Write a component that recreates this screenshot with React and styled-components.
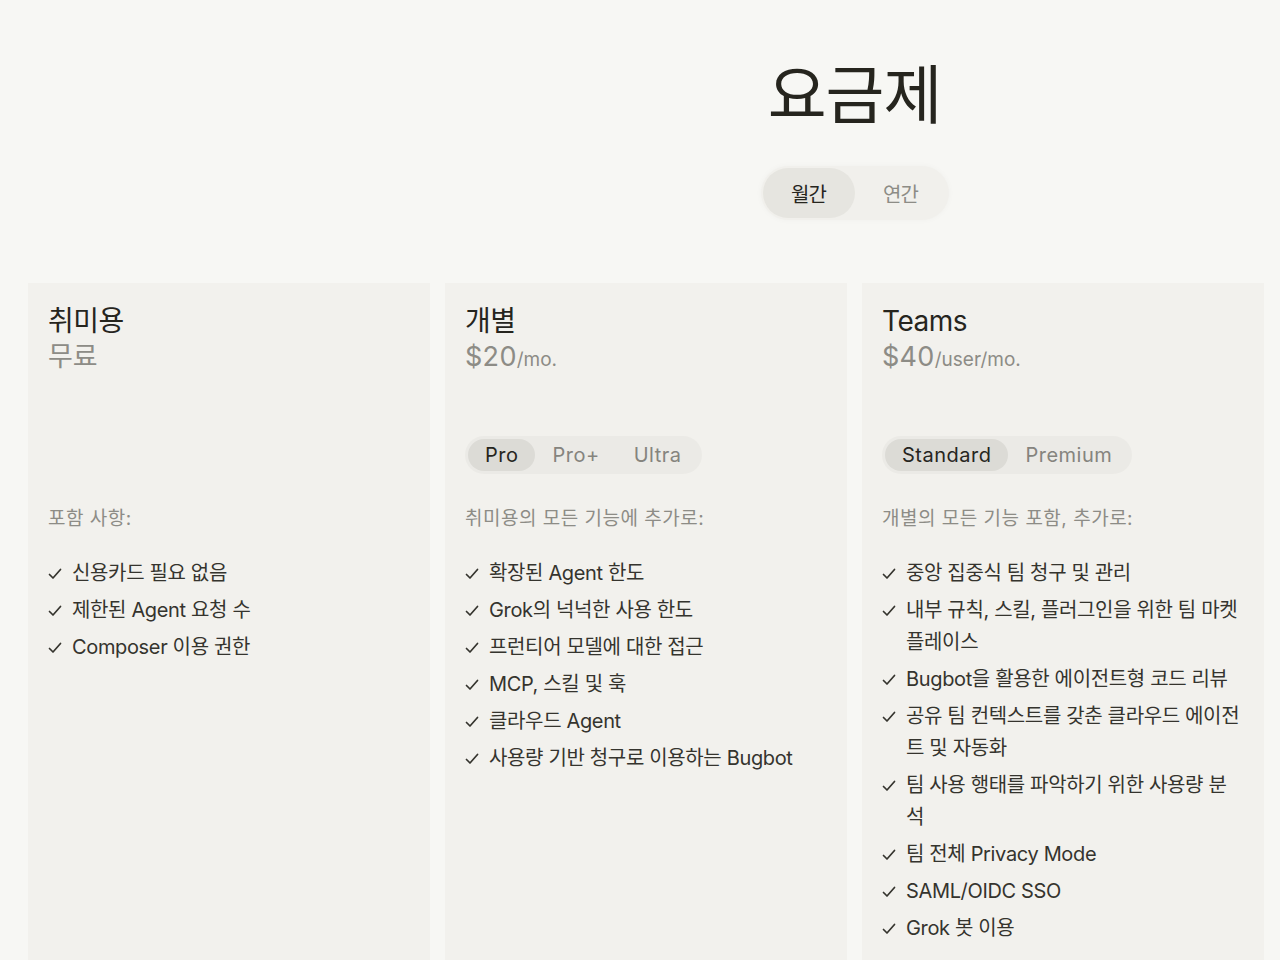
import React, { useState } from 'react';
import styled, { createGlobalStyle } from 'styled-components';

const GlobalStyle = createGlobalStyle`
  html, body {
    margin: 0;
    padding: 0;
    background: #f7f7f4;
  }
  body {
    font-family: 'Inter', 'Noto Sans CJK KR', sans-serif;
    color: #26251e;
  }
`;

const plans = [
  {
    name: '취미용',
    price: '무료',
    free: true,
    label: '포함 사항:',
    features: ['신용카드 필요 없음', '제한된 Agent 요청 수', 'Composer 이용 권한'],
  },
  {
    name: '개별',
    price: '$20',
    unit: '/mo.',
    tiers: ['Pro', 'Pro+', 'Ultra'],
    label: '취미용의 모든 기능에 추가로:',
    features: [
      '확장된 Agent 한도',
      'Grok의 넉넉한 사용 한도',
      '프런티어 모델에 대한 접근',
      'MCP, 스킬 및 훅',
      '클라우드 Agent',
      '사용량 기반 청구로 이용하는 Bugbot',
    ],
  },
  {
    name: 'Teams',
    price: '$40',
    unit: '/user/mo.',
    tiers: ['Standard', 'Premium'],
    label: '개별의 모든 기능 포함, 추가로:',
    features: [
      '중앙 집중식 팀 청구 및 관리',
      '내부 규칙, 스킬, 플러그인을 위한 팀 마켓플레이스',
      'Bugbot을 활용한 에이전트형 코드 리뷰',
      '공유 팀 컨텍스트를 갖춘 클라우드 에이전트 및 자동화',
      '팀 사용 행태를 파악하기 위한 사용량 분석',
      '팀 전체 Privacy Mode',
      'SAML/OIDC SSO',
      'Grok 봇 이용',
    ],
  },
];

function Check() {
  return (
    <CheckIcon viewBox="0 0 14 12" aria-hidden="true">
      <path d="M1.5 6.5 L5 10 L12.5 1.5" fill="none" stroke="currentColor" strokeWidth="1.7" strokeLinecap="round" strokeLinejoin="round" />
    </CheckIcon>
  );
}

function PlanCard({ plan }) {
  const [tier, setTier] = useState(0);
  return (
    <Card>
      <PlanName>{plan.name}</PlanName>
      <Price $free={plan.free}>
        {plan.price}
        {plan.unit && <Unit>{plan.unit}</Unit>}
      </Price>
      <TierSlot>
        {plan.tiers && (
          <Segment>
            {plan.tiers.map((t, i) => (
              <SegButton key={t} $active={i === tier} onClick={() => setTier(i)}>
                {t}
              </SegButton>
            ))}
          </Segment>
        )}
      </TierSlot>
      <IncludesLabel>{plan.label}</IncludesLabel>
      <FeatureList>
        {plan.features.map((f) => (
          <Feature key={f}>
            <Check />
            <span>{f}</span>
          </Feature>
        ))}
      </FeatureList>
    </Card>
  );
}

export default function App() {
  const [period, setPeriod] = useState('monthly');
  return (
    <Page>
      <GlobalStyle />
      <Grid>
        <Header>
          <Title>요금제</Title>
          <Toggle>
            <ToggleButton $active={period === 'monthly'} onClick={() => setPeriod('monthly')}>
              월간
            </ToggleButton>
            <ToggleButton $active={period === 'yearly'} onClick={() => setPeriod('yearly')}>
              연간
            </ToggleButton>
          </Toggle>
        </Header>
        {plans.map((p) => (
          <PlanCard key={p.name} plan={p} />
        ))}
      </Grid>
    </Page>
  );
}

const Page = styled.div`
  min-height: 960px;
  padding: 56px 16px 0 28px;
  box-sizing: border-box;
  overflow: hidden;
`;

const Grid = styled.div`
  display: grid;
  grid-template-columns: repeat(3, 1fr);
  column-gap: 15px;
  row-gap: 63px;
`;

const Header = styled.div`
  grid-column: 2 / 4;
  display: flex;
  flex-direction: column;
  align-items: center;
`;

const Title = styled.h1`
  margin: 0;
  font-size: 64px;
  font-weight: 400;
  line-height: 77px;
  letter-spacing: -1px;
  color: #26251e;
`;

const Toggle = styled.div`
  margin-top: 33px;
  display: flex;
  padding: 2px;
  border-radius: 27px;
  background: #f1f0ec;
  box-shadow: 0 0 6px rgba(38, 37, 30, 0.03);
`;

const ToggleButton = styled.button`
  border: none;
  height: 50px;
  width: 92px;
  border-radius: 25px;
  font-family: inherit;
  font-size: 20px;
  letter-spacing: -1px;
  cursor: pointer;
  background: ${(p) => (p.$active ? '#e6e5e0' : 'transparent')};
  color: ${(p) => (p.$active ? '#26251e' : '#8d8c86')};
`;

const Card = styled.div`
  background: #f2f1ed;
  padding: 20px;
  min-height: 720px;
`;

const PlanName = styled.div`
  font-size: 28px;
  line-height: 36px;
  height: 36px;
  letter-spacing: -0.5px;
  color: #26251e;
`;

const Price = styled.div`
  font-size: 27px;
  line-height: 36px;
  height: 36px;
  letter-spacing: ${(p) => (p.$free ? '0' : '0.3px')};
  color: #8d8c86;
`;

const Unit = styled.span`
  font-size: 19px;
  line-height: 1;
  letter-spacing: 0;
`;

const TierSlot = styled.div`
  height: 38px;
  margin-top: 61px;
`;

const Segment = styled.div`
  display: inline-flex;
  padding: 3px;
  border-radius: 19px;
  background: #ebeae6;
`;

const SegButton = styled.button`
  border: none;
  height: 32px;
  padding: 0 17px;
  border-radius: 16px;
  font-family: inherit;
  font-size: 20px;
  letter-spacing: 0.5px;
  cursor: pointer;
  background: ${(p) => (p.$active ? '#dcdbd6' : 'transparent')};
  color: ${(p) => (p.$active ? '#26251e' : '#85847e')};
`;

const IncludesLabel = styled.div`
  margin-top: 31px;
  font-size: 19px;
  line-height: 28px;
  letter-spacing: 0.5px;
  color: #8d8c86;
`;

const FeatureList = styled.ul`
  list-style: none;
  margin: 24px 0 0;
  padding: 0;
  display: flex;
  flex-direction: column;
  gap: 5px;
`;

const Feature = styled.li`
  display: flex;
  align-items: flex-start;
  gap: 10px;
  font-size: 20px;
  line-height: 32px;
  letter-spacing: -0.35px;
  color: #35342e;
`;

const CheckIcon = styled.svg`
  flex: none;
  width: 14px;
  height: 12px;
  margin-top: 11px;
  color: #35342e;
`;
